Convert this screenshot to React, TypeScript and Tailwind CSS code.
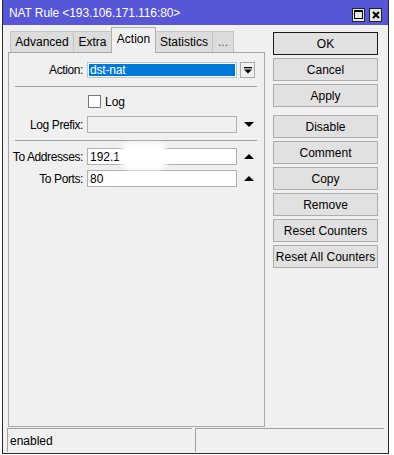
import React from "react";

const font = { fontFamily: '"Liberation Sans", Arial, sans-serif' };

function Btn({ children, primary, className = "" }: { children: React.ReactNode; primary?: boolean; className?: string }) {
  return (
    <div
      className={`h-[23px] w-[105px] flex items-center justify-center bg-[#e1e1e1] text-[12px] text-black whitespace-nowrap border ${
        primary ? "border-[#1a1a1a]" : "border-[#adadad]"
      } ${className}`}
    >
      {children}
    </div>
  );
}

function UpTri() {
  return (
    <svg width="10" height="6" viewBox="0 0 10 6">
      <polygon points="0,5 10,5 5,0" fill="#000" />
    </svg>
  );
}

export default function App() {
  return (
    <div className="w-[394px] h-[455px] bg-white" style={font}>
      <div className="ml-[2px] w-[387px] h-[454px] border-x border-b border-[#2a2a2a] bg-[#f0f0f0] flex flex-col">
        {/* Title bar */}
        <div className="h-[25px] bg-[#5656d6] flex items-center pl-[6px] pr-[6px] shrink-0">
          <span className="text-white text-[12px] leading-none tracking-[-0.1px] whitespace-nowrap">NAT Rule &lt;193.106.171.116:80&gt;</span>
          <div className="ml-auto flex gap-[4px] items-center mt-[4px]">
            <div className="w-[13px] h-[14px] bg-[#e6e6e6] border border-[#222] flex items-center justify-center">
              <div className="w-[9px] h-[9px] border border-black border-t-2" />
            </div>
            <div className="w-[13px] h-[14px] bg-[#e6e6e6] border border-[#222] flex items-center justify-center">
              <svg width="8" height="8" viewBox="0 0 8 8">
                <path d="M1 1 L7 7 M7 1 L1 7" stroke="#000" strokeWidth="2" />
              </svg>
            </div>
          </div>
        </div>

        {/* Body */}
        <div className="flex flex-1 min-h-0">
          {/* Left */}
          <div className="pl-[5px] pt-[2px] flex flex-col">
            <div className="h-[25px] flex items-end pl-[2px] relative z-10 text-[12px] text-black whitespace-nowrap">
              <div className="h-[21px] w-[63px] border-t border-l border-[#c4c4c4] bg-[#dcdcdc] flex items-center justify-center">Advanced</div>
              <div className="h-[21px] w-[38px] border-t border-l border-[#c4c4c4] bg-[#dcdcdc] flex items-center justify-center">Extra</div>
              <div className="h-[26px] w-[45px] border-t border-x border-[#b0b0b0] bg-[#f0f0f0] flex items-center justify-center -mb-px pb-[3px]">Action</div>
              <div className="h-[21px] w-[56px] border-t border-[#c4c4c4] bg-[#dcdcdc] flex items-center justify-center">Statistics</div>
              <div className="h-[21px] w-[22px] border-t border-x border-[#c4c4c4] bg-[#dcdcdc] flex items-center justify-center text-[#555]">...</div>
            </div>
            <div className="w-[257px] h-[375px] border border-[#a8a8a8] bg-[#f0f0f0] text-[12px] text-black flex flex-col pt-[9px] whitespace-nowrap">
              {/* Action */}
              <div className="flex items-center h-[16px]">
                <div className="w-[74px] text-right tracking-[-0.4px]">Action:</div>
                <div className="ml-[4px] w-[150px] h-[16px] border border-[#b8c8d8] bg-white p-[1px]">
                  <div className="h-full bg-[#0078d7] text-white flex items-center pl-[1px] leading-none tracking-[-0.2px]">dst-nat</div>
                </div>
                <div className="ml-[3px] w-[15px] h-[16px] border border-[#a8a8a8] bg-[#f0f0f0] flex items-center justify-center">
                  <svg width="8" height="7" viewBox="0 0 8 7">
                    <rect x="0" y="0" width="8" height="1.3" fill="#000" />
                    <polygon points="0,2.5 8,2.5 4,6.5" fill="#000" />
                  </svg>
                </div>
              </div>
              <div className="ml-[6px] mt-[8px] w-[242px] h-[1px] bg-[#a0a0a0]" />
              {/* Log */}
              <div className="flex items-center mt-[8px] h-[13px]">
                <div className="ml-[79px] w-[13px] h-[13px] border border-[#7a7a7a] bg-white" />
                <span className="ml-[4px]">Log</span>
              </div>
              {/* Log Prefix */}
              <div className="flex items-center mt-[8px] h-[17px]">
                <div className="w-[74px] text-right tracking-[-0.4px]">Log Prefix:</div>
                <div className="ml-[4px] w-[150px] h-[17px] border border-[#b0b0b0] bg-[#f0f0f0]" />
                <div className="ml-[7px] flex items-center">
                  <svg width="10" height="6" viewBox="0 0 10 6">
                    <polygon points="0,0 10,0 5,5" fill="#000" />
                  </svg>
                </div>
              </div>
              <div className="ml-[6px] mt-[7px] w-[242px] h-[1px] bg-[#a0a0a0]" />
              {/* To Addresses */}
              <div className="flex items-center mt-[7px] h-[17px] relative">
                <div className="w-[74px] text-right flex justify-end tracking-[-0.4px]">
                  <span>To Addresses:</span>
                </div>
                <div className="ml-[4px] w-[150px] h-[17px] border border-[#b0b0b0] bg-white flex items-center pl-[2px]">192.1</div>
                <div className="ml-[7px] flex items-center">
                  <UpTri />
                </div>
                <div className="absolute left-[110px] top-[-5px] w-[50px] h-[27px] rounded-full bg-white blur-[2px]" />
              </div>
              {/* To Ports */}
              <div className="flex items-center mt-[5px] h-[17px]">
                <div className="w-[74px] text-right tracking-[-0.4px]">To Ports:</div>
                <div className="ml-[4px] w-[150px] h-[17px] border border-[#b0b0b0] bg-white flex items-center pl-[2px]">80</div>
                <div className="ml-[7px] flex items-center">
                  <UpTri />
                </div>
              </div>
            </div>
          </div>

          {/* Right buttons */}
          <div className="ml-[8px] pt-[7px] flex flex-col gap-[3px]">
            <Btn primary>OK</Btn>
            <Btn>Cancel</Btn>
            <Btn>Apply</Btn>
            <Btn className="mt-[5px]">Disable</Btn>
            <Btn>Comment</Btn>
            <Btn>Copy</Btn>
            <Btn>Remove</Btn>
            <Btn>Reset Counters</Btn>
            <Btn>Reset All Counters</Btn>
          </div>
        </div>

        {/* Status bar */}
        <div className="h-[24px] flex pl-[4px] gap-[3px] shrink-0 mb-[1px]">
          <div className="w-[185px] h-full border-t border-l border-[#a0a0a0] flex items-center pl-[2px] text-[12px] text-black">enabled</div>
          <div className="w-[189px] h-full border-t border-l border-[#a0a0a0]" />
        </div>
      </div>
    </div>
  );
}
